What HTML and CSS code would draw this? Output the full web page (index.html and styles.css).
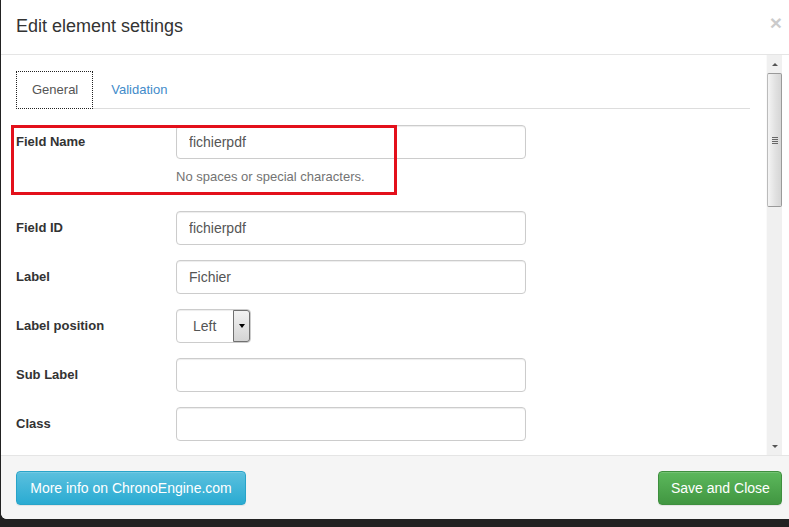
FILE: index.html
```html
<!DOCTYPE html>
<html lang="en">
<head>
    <meta charset="UTF-8">
    <title>Edit element settings</title>
    <link rel="stylesheet" href="styles.css">
</head>
<body>
    <div class="modal">
        <div class="modal-header">
            <h4 class="modal-title">Edit element settings</h4>
            <span class="close">&times;</span>
        </div>

        <div class="modal-body">
            <div class="content">
                <ul class="tabs">
                    <li class="active"><a href="#general">General</a></li>
                    <li><a href="#validation">Validation</a></li>
                </ul>

                <form class="form">
                    <div class="form-group marked">
                        <label class="label">Field Name</label>
                        <div class="field">
                            <input class="input" type="text" value="fichierpdf">
                            <span class="help">No spaces or special characters.</span>
                        </div>
                        <!-- red annotation box -->
                        <div class="mark"></div>
                    </div>
                    <div class="form-group">
                        <label class="label">Field ID</label>
                        <div class="field"><input class="input" type="text" value="fichierpdf"></div>
                    </div>
                    <div class="form-group">
                        <label class="label">Label</label>
                        <div class="field"><input class="input" type="text" value="Fichier"></div>
                    </div>
                    <div class="form-group">
                        <label class="label">Label position</label>
                        <div class="field">
                            <div class="select">
                                <span class="select-value">Left</span>
                                <span class="select-btn"><span class="caret"></span></span>
                            </div>
                        </div>
                    </div>
                    <div class="form-group">
                        <label class="label">Sub Label</label>
                        <div class="field"><input class="input" type="text" value=""></div>
                    </div>
                    <div class="form-group">
                        <label class="label">Class</label>
                        <div class="field"><input class="input" type="text" value=""></div>
                    </div>
                </form>
            </div>

            <!-- fake scrollbar -->
            <div class="scrollbar">
                <div class="arrow up"></div>
                <div class="thumb"><span class="grip"></span></div>
                <div class="track"></div>
                <div class="arrow down"></div>
            </div>
        </div>

        <div class="modal-footer">
            <button class="btn btn-info" type="button">More info on ChronoEngine.com</button>
            <button class="btn btn-success" type="button">Save and Close</button>
        </div>
    </div>
</body>
</html>
```

FILE: styles.css
```css
* {
    box-sizing: border-box;
}

body {
    margin: 0;
    background-color: #222;
    font-family: "Liberation Sans", Arial, sans-serif;
    font-size: 14px;
    color: #333;
    overflow: hidden;
}

.modal {
    margin-left: 1px;
    width: 796px;
    height: 519px;
    background-color: #fff;
    border-radius: 0 0 6px 6px;
    display: flex;
    flex-direction: column;
    overflow: hidden;
}

/* header */
.modal-header {
    height: 55px;
    flex: none;
    padding: 0 15px;
    border-bottom: 1px solid #e5e5e5;
    display: flex;
    align-items: center;
    justify-content: space-between;
}

.modal-title {
    margin: 0 0 1px 0;
    font-size: 18px;
    font-weight: normal;
    color: #333;
}

.close {
    font-size: 21px;
    font-weight: bold;
    color: #000;
    opacity: 0.2;
    line-height: 1;
    margin-bottom: 9px;
}

/* body */
.modal-body {
    height: 400px;
    flex: none;
    padding-right: 15px;
    display: flex;
}

.content {
    flex: 1;
    padding: 16px 16px 0 15px;
    overflow: hidden;
}

.tabs {
    list-style: none;
    margin: 0;
    padding: 0;
    display: flex;
    border-bottom: 1px solid #ddd;
}

.tabs li {
    margin-right: 2px;
    margin-bottom: -1px;
}

.tabs li a {
    display: block;
    padding: 9px 15px 10px 15px;
    line-height: 17px;
    font-size: 13px;
    color: #428bca;
    text-decoration: none;
    border: 1px solid transparent;
}

.tabs li.active a {
    padding: 9px 14px 10px 15px;
    color: #555;
    background-color: #fff;
    border: 1px dotted #222;
}

.form {
    padding-top: 16px;
}

.form-group {
    position: relative;
    display: flex;
    margin-bottom: 15px;
}

.label {
    width: 160px;
    padding-top: 9px;
    font-size: 13px;
    font-weight: bold;
    color: #333;
}

.field {
    display: flex;
    flex-direction: column;
}

.input {
    width: 350px;
    height: 34px;
    padding: 6px 12px;
    border: 1px solid #ccc;
    border-radius: 4px;
    font-family: "Liberation Sans", Arial, sans-serif;
    font-size: 14px;
    color: #555;
    box-shadow: inset 0 1px 1px rgba(0, 0, 0, 0.075);
}

.help {
    margin-top: 8px;
    margin-bottom: 9px;
    line-height: 20px;
    font-size: 13px;
    color: #737373;
}

.mark {
    position: absolute;
    left: -5px;
    top: 0;
    width: 386px;
    height: 70px;
    border: 3px solid #e3101b;
}

.select {
    width: 75px;
    height: 34px;
    border: 1px solid #ccc;
    border-radius: 4px;
    display: flex;
    align-items: stretch;
    box-shadow: inset 0 1px 1px rgba(0, 0, 0, 0.075);
}

.select-value {
    flex: 1;
    padding-left: 16px;
    line-height: 32px;
    font-size: 14px;
    color: #555;
}

.select-btn {
    width: 17px;
    border: 1px solid #707070;
    border-radius: 0 3px 3px 0;
    background: linear-gradient(#f2f2f2, #d4d4d4);
    display: flex;
    align-items: center;
    justify-content: center;
}

.caret {
    width: 0;
    height: 0;
    border-left: 3px solid transparent;
    border-right: 3px solid transparent;
    border-top: 4px solid #000;
}

/* scrollbar */
.scrollbar {
    width: 16px;
    flex: none;
    background-color: #f0f0f0;
    border-left: 1px solid #fafafa;
    display: flex;
    flex-direction: column;
}

.arrow {
    height: 18px;
    flex: none;
    display: flex;
    align-items: center;
    justify-content: center;
}

.arrow.up::before,
.arrow.down::before {
    content: "";
    width: 0;
    height: 0;
    border-left: 3px solid transparent;
    border-right: 3px solid transparent;
}

.arrow.up::before {
    border-bottom: 3px solid #555;
}

.arrow.down::before {
    border-top: 3px solid #555;
}

.thumb {
    height: 134px;
    flex: none;
    border: 1px solid #9a9a9a;
    border-left-color: #bbb;
    border-radius: 2px;
    background: linear-gradient(to right, #f4f4f4, #e0e0e0 60%, #d6d6d6);
    display: flex;
    align-items: center;
    justify-content: center;
}

.grip {
    width: 6px;
    height: 7px;
    background: repeating-linear-gradient(#666 0, #666 1px, transparent 1px, transparent 2px);
}

.track {
    flex: 1;
}

/* footer */
.modal-footer {
    flex: 1;
    padding: 15px 15px 0 15px;
    border-top: 1px solid #e5e5e5;
    background-color: #f5f5f5;
    display: flex;
    justify-content: space-between;
    align-items: flex-start;
}

.btn {
    height: 34px;
    padding: 6px 12px;
    border: 1px solid transparent;
    border-radius: 4px;
    font-family: "Liberation Sans", Arial, sans-serif;
    font-size: 14px;
    color: #fff;
    white-space: nowrap;
    box-shadow: inset 0 1px 0 rgba(255, 255, 255, 0.15), 0 1px 1px rgba(0, 0, 0, 0.075);
}

.btn-info {
    width: 230px;
    background: linear-gradient(#5bc0de, #2aabd2);
    border-color: #28a4c9;
}

.btn-success {
    width: 124px;
    background: linear-gradient(#5cb85c, #419641);
    border-color: #3e8f3e;
}
```
